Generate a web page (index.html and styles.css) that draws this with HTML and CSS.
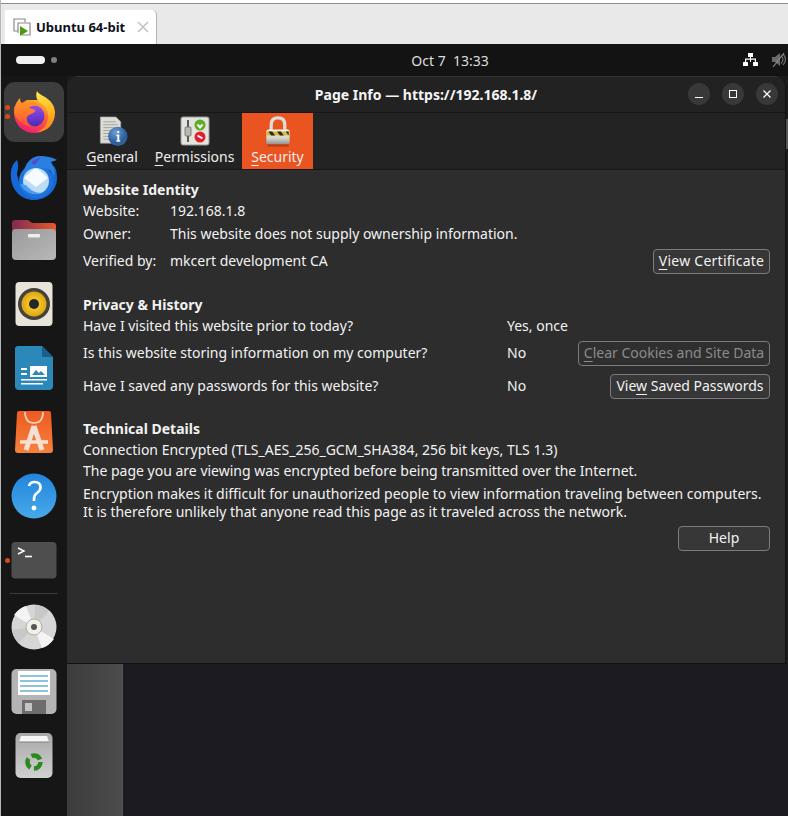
FILE: index.html
```html
<!DOCTYPE html>
<html>

<head>
    <meta charset="utf-8">
    <title>Page Info</title>
    <link rel="stylesheet" href="styles.css">
</head>

<body>
    <div class="tabstrip">
        <div class="vmtab">
            <svg class="vmicon" width="18" height="18" viewBox="0 0 18 18">
                <path d="M5 13H1V1h11v3" fill="none" stroke="#8a8a8a" stroke-width="1.2"/>
                <path d="M5 15V5h12v12H9" fill="none" stroke="#8a8a8a" stroke-width="1.2"/>
                <path d="M7 8l8 5-8 5z" fill="#4f9a0c"/>
            </svg>
            <span class="vmlabel">Ubuntu 64-bit</span>
            <svg class="vmclose" width="12" height="12" viewBox="0 0 12 12">
                <path d="M1 1l10 10M11 1L1 11" stroke="#c4c4c4" stroke-width="1.6"/>
            </svg>
        </div>
    </div>

    <div class="topbar">
        <div class="workspaces"><span class="pill"></span><span class="wsdot"></span></div>
        <div class="clock">Oct 7&nbsp;&nbsp;13:33</div>
        <div class="tray">
            <svg width="15" height="13" viewBox="0 0 15 13">
                <path d="M5 0h5v4H8v1.500h5V9h-1.200V6.700H8V9H7V6.700H3.200V9H2V5.500h5V4H5z" fill="#fff"/>
                <rect x="0" y="9" width="5" height="4" rx="0.5" fill="#fff"/>
                <rect x="10" y="9" width="5" height="4" rx="0.5" fill="#fff"/>
            </svg>
            <svg width="14" height="15" viewBox="0 0 14 15">
                <path d="M0 5h3l5-4v13l-5-4H0z" fill="#6a6a6a"/>
                <path d="M9 3.500q4 4 0 8M11 2q5 5.500 0 11" fill="none" stroke="#6a6a6a" stroke-width="1.200"/>
                <path d="M1 15L12 1" stroke="#8a8a8a" stroke-width="1.200"/>
            </svg>
        </div>
    </div>

    <div class="main">
        <div class="dock">
            <div class="dockitem active">
                <span class="rundot first"></span><span class="rundot second"></span>
                <svg width="42" height="43" viewBox="0 0 42 43">
                    <defs>
                        <linearGradient id="ffbody" x1="0.8" y1="0.1" x2="0.3" y2="1">
                            <stop offset="0" stop-color="#ffb52a"/>
                            <stop offset="0.45" stop-color="#ff5a36"/>
                            <stop offset="1" stop-color="#ee1a78"/>
                        </linearGradient>
                        <linearGradient id="ffcore" x1="0.5" y1="0" x2="0.5" y2="1">
                            <stop offset="0" stop-color="#9a4be8"/>
                            <stop offset="1" stop-color="#4a2bb8"/>
                        </linearGradient>
                        <linearGradient id="ffflame" x1="0.4" y1="0" x2="0.6" y2="1">
                            <stop offset="0" stop-color="#ffe54a"/>
                            <stop offset="0.6" stop-color="#ffb020"/>
                            <stop offset="1" stop-color="#ff7a20"/>
                        </linearGradient>
                        <linearGradient id="fffox" x1="0.5" y1="0" x2="0.5" y2="1">
                            <stop offset="0" stop-color="#ffa028"/>
                            <stop offset="1" stop-color="#ff5030"/>
                        </linearGradient>
                    </defs>
                    <path d="M1 22a20 20 0 0 0 40 0V16L24 9H14L1 16z" fill="url(#ffbody)"/>
                    <circle cx="21" cy="25" r="10.500" fill="url(#ffcore)"/>
                    <path d="M24 0c-2 6 0 10 5 13 5 4 7 9 6 15-1 7-6 11-11 13 10 0 18-8 18-19 0-8-5-13-10-16-4-2-7-4-8-6z" fill="url(#ffflame)"/>
                    <path d="M1 22C1 15 4 10 7 7c0 3 1 5 3 6 3-2 7-3 11-2 4 1 7 3 9 6-3-2-7-3-10-2-2 0-3 1-4 2 2 1 5 1 6 2 1 1-1 3-4 4-3 1-5 3-4 6 1 4 4 6 8 7-8 0-18-5-21-14z" fill="url(#fffox)"/>
                </svg>
            </div>
            <div class="dockitem">
                <svg width="48" height="46" viewBox="0 0 48 46">
                    <path d="M7 6C2 10 0 17 1 24c1 13 11 22 23 22s23-9 23-22c0-5-1-9-3-12-2 1-3 2-3 4 0 13-7 24-18 24S9 30 7 20c1-5 2-9 0-14z" fill="#1668d8"/>
                    <circle cx="26" cy="27" r="17" fill="#1f74dc"/>
                    <path d="M14 20C14 9 22 2 30 2c6 0 12 1 17 4l-6 2c3 4 4 9 3 15-2-6-6-9-12-9-6 0-13 2-18 6z" fill="#2a80e2"/>
                    <path d="M21 9c2-3 6-5 10-5-3 2-4 4-5 6-2 1-4 0-5-1z" fill="#5a4ac8"/>
                    <circle cx="26" cy="27" r="13" fill="#bcdcf8"/>
                    <path d="M14 24L24 15q2-1 4 0l10 9-12 9z" fill="#f6fbff"/>
                    <path d="M10 30c4 8 12 12 22 9-7 0-12-3-16-8z" fill="#4a9cf0"/>
                </svg>
            </div>
            <div class="dockitem">
                <svg width="46" height="42" viewBox="0 0 46 42">
                    <defs>
                        <linearGradient id="foldertop" x1="0" y1="0" x2="1" y2="0">
                            <stop offset="0" stop-color="#7e2b55"/>
                            <stop offset="1" stop-color="#e9572a"/>
                        </linearGradient>
                        <linearGradient id="folderbody" x1="0" y1="0" x2="1" y2="1">
                            <stop offset="0" stop-color="#9a9a9a"/>
                            <stop offset="1" stop-color="#b8b8b8"/>
                        </linearGradient>
                    </defs>
                    <path d="M1 4q0-3 3-3h13l4 3h21q3 0 3 3v8H1z" fill="url(#foldertop)"/>
                    <rect x="1" y="10" width="44" height="31" rx="4" fill="url(#folderbody)"/>
                    <rect x="17" y="15" width="12" height="3.500" rx="1" fill="#eeeeee"/>
                </svg>
            </div>
            <div class="dockitem">
                <svg width="38" height="44" viewBox="0 0 38 44">
                    <defs>
                        <radialGradient id="cone">
                            <stop offset="0.4" stop-color="#f4c62a"/>
                            <stop offset="1" stop-color="#dca612"/>
                        </radialGradient>
                    </defs>
                    <rect x="0.500" y="0" width="37" height="44" rx="4" fill="#e8e4da"/>
                    <circle cx="19" cy="22" r="16" fill="#44423e"/>
                    <circle cx="19" cy="22" r="12.500" fill="url(#cone)"/>
                    <circle cx="19" cy="22" r="5" fill="#262626"/>
                </svg>
            </div>
            <div class="dockitem">
                <svg width="38" height="44" viewBox="0 0 38 44">
                    <path d="M3 0h24l11 11v29q0 4-4 4H4q-4 0-4-4V3q0-3 3-3z" fill="#2b88b8"/>
                    <path d="M27 0l11 11H27z" fill="#1a5f88"/>
                    <path d="M6 22h6v2H6zM6 27h6v2H6z" fill="#fff"/>
                    <path d="M15 20h17v11H15z" fill="#fff"/>
                    <path d="M17 29l4-5 3 3 2-2 4 4z" fill="#2b88b8"/>
                    <path d="M6 33h26v1.600H6zM6 37h22v1.600H6z" fill="#fff"/>
                </svg>
            </div>
            <div class="dockitem">
                <svg width="38" height="42" viewBox="0 0 38 42">
                    <defs>
                        <linearGradient id="appbag" x1="0.5" y1="0" x2="0.5" y2="1">
                            <stop offset="0" stop-color="#ee5a20"/>
                            <stop offset="1" stop-color="#f5823c"/>
                        </linearGradient>
                    </defs>
                    <path d="M4 0h30q2 0 2 2l2 37q0 3-3 3H3q-3 0-3-3L2 2q0-2 2-2z" fill="url(#appbag)"/>
                    <path d="M10 1q0 11 9 11t9-11" fill="none" stroke="#f6d5c5" stroke-width="1.600"/>
                    <path d="M19 15l-8 24M19 15l8 24" fill="none" stroke="#f6e0d4" stroke-width="5"/>
                    <path d="M5 31h28" stroke="#f6e0d4" stroke-width="3.500"/>
                </svg>
            </div>
            <div class="dockitem">
                <svg width="46" height="46" viewBox="0 0 46 46">
                    <defs>
                        <linearGradient id="helpball" x1="0.5" y1="0" x2="0.5" y2="1">
                            <stop offset="0" stop-color="#2285dc"/>
                            <stop offset="1" stop-color="#47a9ea"/>
                        </linearGradient>
                    </defs>
                    <circle cx="23" cy="23" r="22.500" fill="url(#helpball)"/>
                    <path d="M18 13q1-4 5.500-4 6 0 6 5.500 0 3-3.500 5.500-3 2-3 6v2" fill="none" stroke="#fff" stroke-width="2.600"/>
                    <circle cx="23" cy="35" r="2.400" fill="#fff"/>
                </svg>
            </div>
            <div class="dockitem">
                <span class="rundot single"></span>
                <svg width="46" height="37" viewBox="0 0 46 37">
                    <rect x="0.500" width="45" height="36.500" rx="4" fill="#4e4e4e"/>
                    <path d="M7 6l6 3-6 3" fill="none" stroke="#fff" stroke-width="1.400"/>
                    <path d="M14 14.500h7" stroke="#fff" stroke-width="1.600"/>
                </svg>
            </div>
            <div class="docksep"></div>
            <div class="dockitem">
                <svg width="46" height="46" viewBox="0 0 46 46">
                    <circle cx="23" cy="23" r="22.500" fill="#d6d6d6"/>
                    <path d="M23 23L3 11q5-7 12-9zM23 23l20 12q-5 7-12 9z" fill="#f4f4f4"/>
                    <path d="M23 23L24 1q8 0 14 6zM23 23L8 39q-6-6-7-13z" fill="#c8c8c8"/>
                    <circle cx="23" cy="23" r="8" fill="#f2f0ea" stroke="#b9ad98"/>
                    <circle cx="23" cy="23" r="3" fill="#555"/>
                </svg>
            </div>
            <div class="dockitem">
                <svg width="46" height="45" viewBox="0 0 46 45">
                    <rect x="0.500" width="45" height="45" rx="5" fill="#b4b4b4"/>
                    <rect x="7" y="2" width="32" height="24" fill="#fff"/>
                    <path d="M9 7h28M9 12h28M9 17h28M9 22h28" stroke="#1d86b8" stroke-width="1"/>
                    <rect x="11" y="31" width="24" height="14" fill="#6d6d6d"/>
                    <rect x="14" y="34" width="7" height="8" fill="#c4c4c4"/>
                </svg>
            </div>
            <div class="dockitem">
                <svg width="38" height="45" viewBox="0 0 38 45">
                    <defs>
                        <linearGradient id="binbody" x1="0.5" y1="0" x2="0.5" y2="1">
                            <stop offset="0" stop-color="#a8a8a8"/>
                            <stop offset="1" stop-color="#d0d0d0"/>
                        </linearGradient>
                    </defs>
                    <rect x="0.500" width="37" height="45" rx="5" fill="url(#binbody)"/>
                    <path d="M6 3h26l2 6H4z" fill="#f6f6f6"/>
                    <path d="M4 9h30" stroke="#7e7e7e"/>
                    <circle cx="19" cy="29" r="6.500" fill="none" stroke="#2a8a1f" stroke-width="4.500" stroke-dasharray="10 3.600"/>
                </svg>
            </div>
        </div>

        <div class="desktop">
            <div class="window">
                <div class="titlebar">
                    <div class="wintitle">Page Info — https://192.168.1.8/</div>
                    <div class="winbuttons">
                        <span class="winbtn"><svg width="10" height="10" viewBox="0 0 10 10"><path d="M1 8.500h8" stroke="#fff" stroke-width="1"/></svg></span>
                        <span class="winbtn"><svg width="10" height="10" viewBox="0 0 10 10"><rect x="1.500" y="1.500" width="7" height="7" fill="none" stroke="#fff"/></svg></span>
                        <span class="winbtn"><svg width="10" height="10" viewBox="0 0 10 10"><path d="M1.500 1.500l7 7M8.500 1.500l-7 7" stroke="#fff" stroke-width="1.200"/></svg></span>
                    </div>
                </div>

                <div class="tabs">
                    <div class="tab general">
                        <svg width="32" height="32" viewBox="0 0 32 32">
                            <defs>
                                <radialGradient id="infoball" cx="0.4" cy="0.3">
                                    <stop offset="0" stop-color="#6f9fd8"/>
                                    <stop offset="1" stop-color="#2f5f9e"/>
                                </radialGradient>
                            </defs>
                            <path d="M4 1h16l5 5v22H4z" fill="#dcdcd6" stroke="#a8a8a4" stroke-width="0.700"/>
                            <path d="M7 6h13M7 9h15M7 12h15M7 15h13M7 18h10M7 21h10M7 24h9" stroke="#a6a6a0" stroke-width="1"/>
                            <circle cx="22" cy="21" r="10" fill="url(#infoball)"/>
                            <path d="M20.500 19h3v6h1v1.500h-4V25h1v-4.500h-1zM21.500 15.500h2v2h-2z" fill="#fff"/>
                        </svg>
                        <span class="tablabel"><u>G</u>eneral</span>
                    </div>
                    <div class="tab permissions">
                        <svg width="30" height="30" viewBox="0 0 30 30">
                            <rect x="1" y="1" width="28" height="28" rx="2" fill="#e4e4de" stroke="#9a9a96"/>
                            <path d="M8 4v22" stroke="#5a5a5a" stroke-width="2"/>
                            <rect x="5" y="11" width="6" height="9" rx="1" fill="#b8b8b4" stroke="#6a6a6a" stroke-width="0.800"/>
                            <circle cx="20" cy="9" r="5.500" fill="#5cad25"/>
                            <path d="M17.500 8.500l2.500 3 2.500-3" fill="none" stroke="#fff" stroke-width="2"/>
                            <circle cx="20" cy="21" r="5.500" fill="#e0202c"/>
                            <path d="M17.500 19.500l5 3" stroke="#fff" stroke-width="2"/>
                        </svg>
                        <span class="tablabel"><u>P</u>ermissions</span>
                    </div>
                    <div class="tab security">
                        <svg width="28" height="32" viewBox="0 0 28 32">
                            <defs>
                                <linearGradient id="lockbody" x1="0.5" y1="0" x2="0.5" y2="1">
                                    <stop offset="0" stop-color="#f4f4ee"/>
                                    <stop offset="0.6" stop-color="#d4d4ce"/>
                                    <stop offset="1" stop-color="#96968f"/>
                                </linearGradient>
                            </defs>
                            <path d="M7 15V9q0-7 7-7t7 7v6" fill="none" stroke="#dcdcd8" stroke-width="3.400"/>
                            <rect x="2" y="14" width="24" height="15" rx="2" fill="url(#lockbody)"/>
                            <rect x="2" y="16" width="24" height="4" fill="#d4bc3a"/>
                            <path d="M4 16l3 4h4l-3-4zM13 16l3 4h4l-3-4zM22 16l3 4v-4z" fill="#2e2a12"/>
                            <path d="M3 30.500h22" stroke="#a8431c" stroke-width="2"/>
                        </svg>
                        <span class="tablabel"><u>S</u>ecurity</span>
                    </div>
                </div>

                <div class="content">
                    <div class="title">Website Identity</div>
                    <div class="row identity"><span class="key">Website:</span><span>192.168.1.8</span></div>
                    <div class="row identity"><span class="key">Owner:</span><span>This website does not supply ownership information.</span></div>
                    <div class="row identity verified">
                        <span class="key">Verified by:</span><span>mkcert development CA</span>
                        <button class="btn cert"><u>V</u>iew Certificate</button>
                    </div>

                    <div class="title privacy">Privacy &amp; History</div>
                    <div class="row history visited"><span class="question">Have I visited this website prior to today?</span><span>Yes, once</span></div>
                    <div class="row history storing">
                        <span class="question">Is this website storing information on my computer?</span><span>No</span>
                        <button class="btn disabled"><u>C</u>lear Cookies and Site Data</button>
                    </div>
                    <div class="row history saved">
                        <span class="question">Have I saved any passwords for this website?</span><span>No</span>
                        <button class="btn saved-btn">Vie<u>w</u> Saved Passwords</button>
                    </div>

                    <div class="title technical">Technical Details</div>
                    <div class="line">Connection Encrypted (TLS_AES_256_GCM_SHA384, 256 bit keys, TLS 1.3)</div>
                    <div class="line">The page you are viewing was encrypted before being transmitted over the Internet.</div>
                    <p class="para">Encryption makes it difficult for unauthorized people to view information traveling between computers.<br>It is therefore unlikely that anyone read this page as it traveled across the network.</p>
                    <div class="helprow"><button class="btn help">Help</button></div>
                </div>
            </div>
            <div class="behind">
                <div class="sidepane"></div>
                <div class="editor"></div>
            </div>
        </div>
    </div>
</body>

</html>
```
FILE: styles.css
```css
* {
    box-sizing: border-box;
    margin: 0;
    padding: 0;
}

html,
body {
    width: 788px;
    height: 816px;
    overflow: hidden;
}

body {
    display: flex;
    flex-direction: column;
    font: 14px "Noto Sans", sans-serif;
    color: #f2f2f2;
    background-color: #161616;
    border-left: 1px solid #b8b8b8;
}

/* vmware tab strip */
.tabstrip {
    height: 44px;
    padding: 7px 0 0 4px;
    background-color: #e9e9e9;
    border-top: 3px solid #fff;
    box-shadow: inset 0 1px 0 #8c8c8c;
}

.vmtab {
    display: flex;
    align-items: center;
    width: 152px;
    height: 34px;
    padding: 0 7px 0 8px;
    background-color: #fff;
    border-top-right-radius: 5px;
    border-right: 1px solid #b4b4b4;
}

.vmlabel {
    margin-left: 5px;
    font: bold 13px "Noto Sans", sans-serif;
    color: #0c1020;
}

.vmclose {
    margin-left: auto;
}

/* ubuntu top bar */
.topbar {
    display: flex;
    align-items: center;
    height: 32px;
    padding: 0 0 0 15px;
    position: relative;
    background-color: #131313;
}

.workspaces {
    display: flex;
    align-items: center;
    gap: 6px;
}

.pill {
    width: 29px;
    height: 8px;
    border-radius: 4px;
    background-color: #f2f2f2;
}

.wsdot {
    width: 6px;
    height: 6px;
    border-radius: 50%;
    background-color: #808080;
}

.clock {
    position: absolute;
    left: 0;
    right: 0;
    padding-left: 111px;
    text-align: center;
    font-size: 14px;
    color: #dedede;
}

.tray {
    display: flex;
    align-items: center;
    gap: 14px;
    margin-left: auto;
    margin-right: 2px;
    margin-bottom: 1px;
}

.main {
    display: flex;
    flex: 1;
    min-height: 0;
}

/* dock */
.dock {
    display: flex;
    flex-direction: column;
    align-items: center;
    width: 66px;
    padding-top: 6px;
    background-color: #161616;
}

.dockitem {
    position: relative;
    display: flex;
    align-items: center;
    justify-content: center;
    width: 60px;
    height: 60px;
    margin-bottom: 4px;
}

.dockitem.active {
    margin-bottom: 5px;
    background-color: #3d3d3d;
    border-radius: 11px;
}

.dockitem:nth-child(2) {
    margin-bottom: 3px;
}

.rundot {
    position: absolute;
    left: 1px;
    width: 5px;
    height: 5px;
    border-radius: 50%;
    background-color: #d9481c;
}

.rundot.first {
    top: 23px;
}

.rundot.second {
    top: 32px;
}

.rundot.single {
    top: 28px;
}

.docksep {
    width: 48px;
    height: 1px;
    margin: -1px 0 3px;
    background-color: #3c3c3c;
}

/* page info window */
.desktop {
    display: flex;
    flex-direction: column;
    flex: 1;
    min-width: 0;
    background: linear-gradient(to bottom, #1a1a1a 43px, #555 43px, #555 73px, #1a1a1a 73px);
}

.window {
    height: 588px;
    margin-right: 2px;
    background-color: #2d2d2d;
    border-right: 1px solid #111;
    border-bottom: 1px solid #111;
    border-top-left-radius: 12px;
    border-top-right-radius: 12px;
    overflow: hidden;
}

.titlebar {
    position: relative;
    display: flex;
    align-items: center;
    justify-content: center;
    height: 37px;
    background-color: #222;
    border-top: 1px solid #333;
    border-bottom: 1px solid #171717;
}

.wintitle {
    font-weight: bold;
    font-size: 14px;
    color: #f5f5f5;
}

.winbuttons {
    position: absolute;
    top: 6px;
    right: 7px;
    display: flex;
    gap: 12px;
}

.winbtn {
    display: flex;
    align-items: center;
    justify-content: center;
    width: 22px;
    height: 22px;
    border-radius: 50%;
    background-color: #383838;
}

.tabs {
    display: flex;
    height: 57px;
    padding-left: 10px;
    background-color: #232323;
    border-bottom: 1px solid #171717;
}

.tab {
    display: flex;
    flex-direction: column;
    align-items: center;
    justify-content: space-between;
    height: 56px;
    padding: 3px 0;
}

.tab.general {
    width: 70px;
}

.tab.permissions {
    width: 95px;
}

.tab.security {
    width: 71px;
    background-color: #e95420;
}

.tablabel {
    line-height: 19px;
    color: #eee;
}

u {
    text-underline-offset: 3px;
}

.content {
    padding: 10px 15px 0 16px;
}

.title {
    height: 20px;
    line-height: 20px;
    font-weight: bold;
}

.row {
    display: flex;
    align-items: center;
}

.row > span {
    margin-bottom: 2px;
}

.row.identity {
    height: 20px;
    margin-top: 3px;
}

.title + .row.identity {
    margin-top: 1px;
}

.row.verified {
    height: 25px;
    margin-top: 5px;
}

.key {
    width: 87px;
}

.question {
    width: 424px;
}

.btn {
    margin-left: auto;
    height: 25px;
    padding: 0 0 2px;
    font: 14px "Noto Sans", sans-serif;
    color: #f2f2f2;
    background-color: #373737;
    border: 1px solid #7c7b82;
    border-radius: 4px;
}

.btn.cert {
    width: 117px;
    letter-spacing: 0.25px;
}

.btn.disabled {
    width: 192px;
    color: #8b8b8b;
    background-color: #2f2f2f;
}

.btn.saved-btn {
    width: 160px;
}

.btn.help {
    width: 92px;
}

.title.privacy {
    margin-top: 21px;
}

.row.visited {
    height: 20px;
    margin-top: 1px;
}

.row.storing {
    height: 25px;
    margin-top: 5px;
}

.row.saved {
    height: 25px;
    margin-top: 8px;
}

.title.technical {
    margin-top: 20px;
}

.line {
    height: 21px;
    line-height: 21px;
}

.para {
    margin-top: 4px;
    line-height: 18px;
}

.helprow {
    display: flex;
    margin-top: 5px;
}

/* what shows under the window */
.behind {
    display: flex;
    flex: 1;
}

.sidepane {
    width: 56px;
    background: linear-gradient(to right, #3c3c3c, #4c4c4c);
    border-right: 1px solid #55555a;
}

.editor {
    flex: 1;
    background-color: #1c1b22;
}
```
